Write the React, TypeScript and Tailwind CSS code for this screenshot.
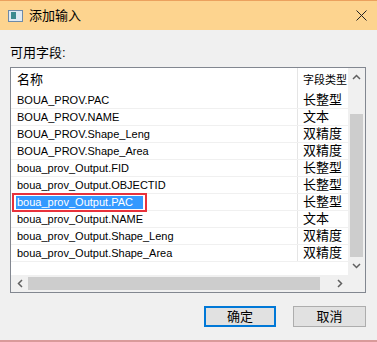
import React from 'react';

const rows = [
  { name: 'BOUA_PROV.PAC', type: '长整型' },
  { name: 'BOUA_PROV.NAME', type: '文本' },
  { name: 'BOUA_PROV.Shape_Leng', type: '双精度' },
  { name: 'BOUA_PROV.Shape_Area', type: '双精度' },
  { name: 'boua_prov_Output.FID', type: '长整型' },
  { name: 'boua_prov_Output.OBJECTID', type: '长整型' },
  { name: 'boua_prov_Output.PAC', type: '长整型', selected: true },
  { name: 'boua_prov_Output.NAME', type: '文本' },
  { name: 'boua_prov_Output.Shape_Leng', type: '双精度' },
  { name: 'boua_prov_Output.Shape_Area', type: '双精度' },
];

const font = "font-['Liberation_Sans','Noto_Sans_CJK_SC',sans-serif]";

export default function App() {
  return (
    <div className={`w-[377px] h-[342px] bg-[#f0f0f0] flex flex-col overflow-hidden ${font} text-[12px] text-black`}>
      {/* Title bar */}
      <div className="h-[30px] flex-none flex items-center bg-[#fdd48f] border-t border-[#eba15e]">
        <div className="ml-[8px] w-[15px] h-[12px] border border-[#6d8aa8] bg-[#dfe9f2] flex items-center pl-[2px]">
          <div className="w-[5px] h-[7px] bg-[#3b8a8f]" />
        </div>
        <span className="ml-[6px] text-[13px]">添加输入</span>
        <svg className="ml-auto mr-[10px]" width="11" height="11" viewBox="0 0 11 11">
          <path d="M0.5 0.5 L10.5 10.5 M10.5 0.5 L0.5 10.5" stroke="#222" strokeWidth="1" />
        </svg>
      </div>

      {/* Body */}
      <div className="flex-1 flex flex-col px-[10px]">
        <div className="h-[37px] flex items-end pb-[5px] text-[13px]">可用字段:</div>

        {/* List */}
        <div className="w-[356px] h-[226px] border border-[#828790] bg-white flex flex-col">
          <div className="flex flex-1">
            {/* Columns */}
            <div className="w-[337px] flex flex-col">
              <div className="h-[24px] flex items-center">
                <div className="w-[287px] h-full border-r border-[#e5e5e5] pl-[6px] flex items-center text-[13px]">名称</div>
                <div className="flex-1 pl-[5px] whitespace-nowrap text-[11px]">字段类型</div>
              </div>
              {rows.map((r) => (
                <div key={r.name} className="h-[17px] flex border-b border-[#f0f0f0]">
                  <div className="w-[287px] h-full border-r border-[#e5e5e5] flex items-center relative text-[11px]">
                    {r.selected ? (
                      <>
                        <span className="ml-[5px] bg-[#3399ff] text-white pl-[1px] h-[13px] leading-[13px] w-[127px]">{r.name}</span>
                        <div className="absolute left-[1px] top-[-1px] w-[135px] h-[19px] border-2 border-[#e8323c]" />
                      </>
                    ) : (
                      <span className="pl-[6px]">{r.name}</span>
                    )}
                  </div>
                  <div className="flex-1 pl-[5px] flex items-center whitespace-nowrap overflow-hidden text-[13px]">{r.type}</div>
                </div>
              ))}
            </div>
            {/* Vertical scrollbar */}
            <div className="w-[17px] bg-[#f0f0f0] flex flex-col">
              <div className="h-[17px] flex items-center justify-center">
                <svg width="9" height="6" viewBox="0 0 9 6"><path d="M1 5 L4.5 1.5 L8 5" stroke="#606060" strokeWidth="1.5" fill="none" /></svg>
              </div>
              <div className="h-[29px]" />
              <div className="h-[143px] mx-[2px] bg-[#cdcdcd]" />
              <div className="flex-1 flex items-center justify-center">
                <svg width="9" height="6" viewBox="0 0 9 6"><path d="M1 1 L4.5 4.5 L8 1" stroke="#606060" strokeWidth="1.5" fill="none" /></svg>
              </div>
            </div>
          </div>
          {/* Horizontal scrollbar */}
          <div className="h-[17px] flex-none flex bg-[#f0f0f0]">
            <div className="w-[17px] flex items-center justify-center">
              <svg width="6" height="9" viewBox="0 0 6 9"><path d="M5 1 L1.5 4.5 L5 8" stroke="#606060" strokeWidth="1.5" fill="none" /></svg>
            </div>
            <div className="w-[292px] my-[2px] bg-[#cdcdcd]" />
            <div className="w-[11px]" />
            <div className="w-[17px] flex items-center justify-center">
              <svg width="6" height="9" viewBox="0 0 6 9"><path d="M1 1 L4.5 4.5 L1 8" stroke="#606060" strokeWidth="1.5" fill="none" /></svg>
            </div>
            <div className="flex-1" />
          </div>
        </div>

        {/* Buttons */}
        <div className="flex justify-end gap-[17px] mt-[13px] pr-[1px]">
          <button className="w-[72px] h-[21px] bg-[#e1e1e1] border-2 border-[#0078d7] text-[13px] leading-none">确定</button>
          <button className="w-[73px] h-[21px] bg-[#e1e1e1] border border-[#adadad] text-[13px] leading-none">取消</button>
        </div>
      </div>
      <div className="h-[2px] flex-none bg-[#d99a9a]" />
    </div>
  );
}
